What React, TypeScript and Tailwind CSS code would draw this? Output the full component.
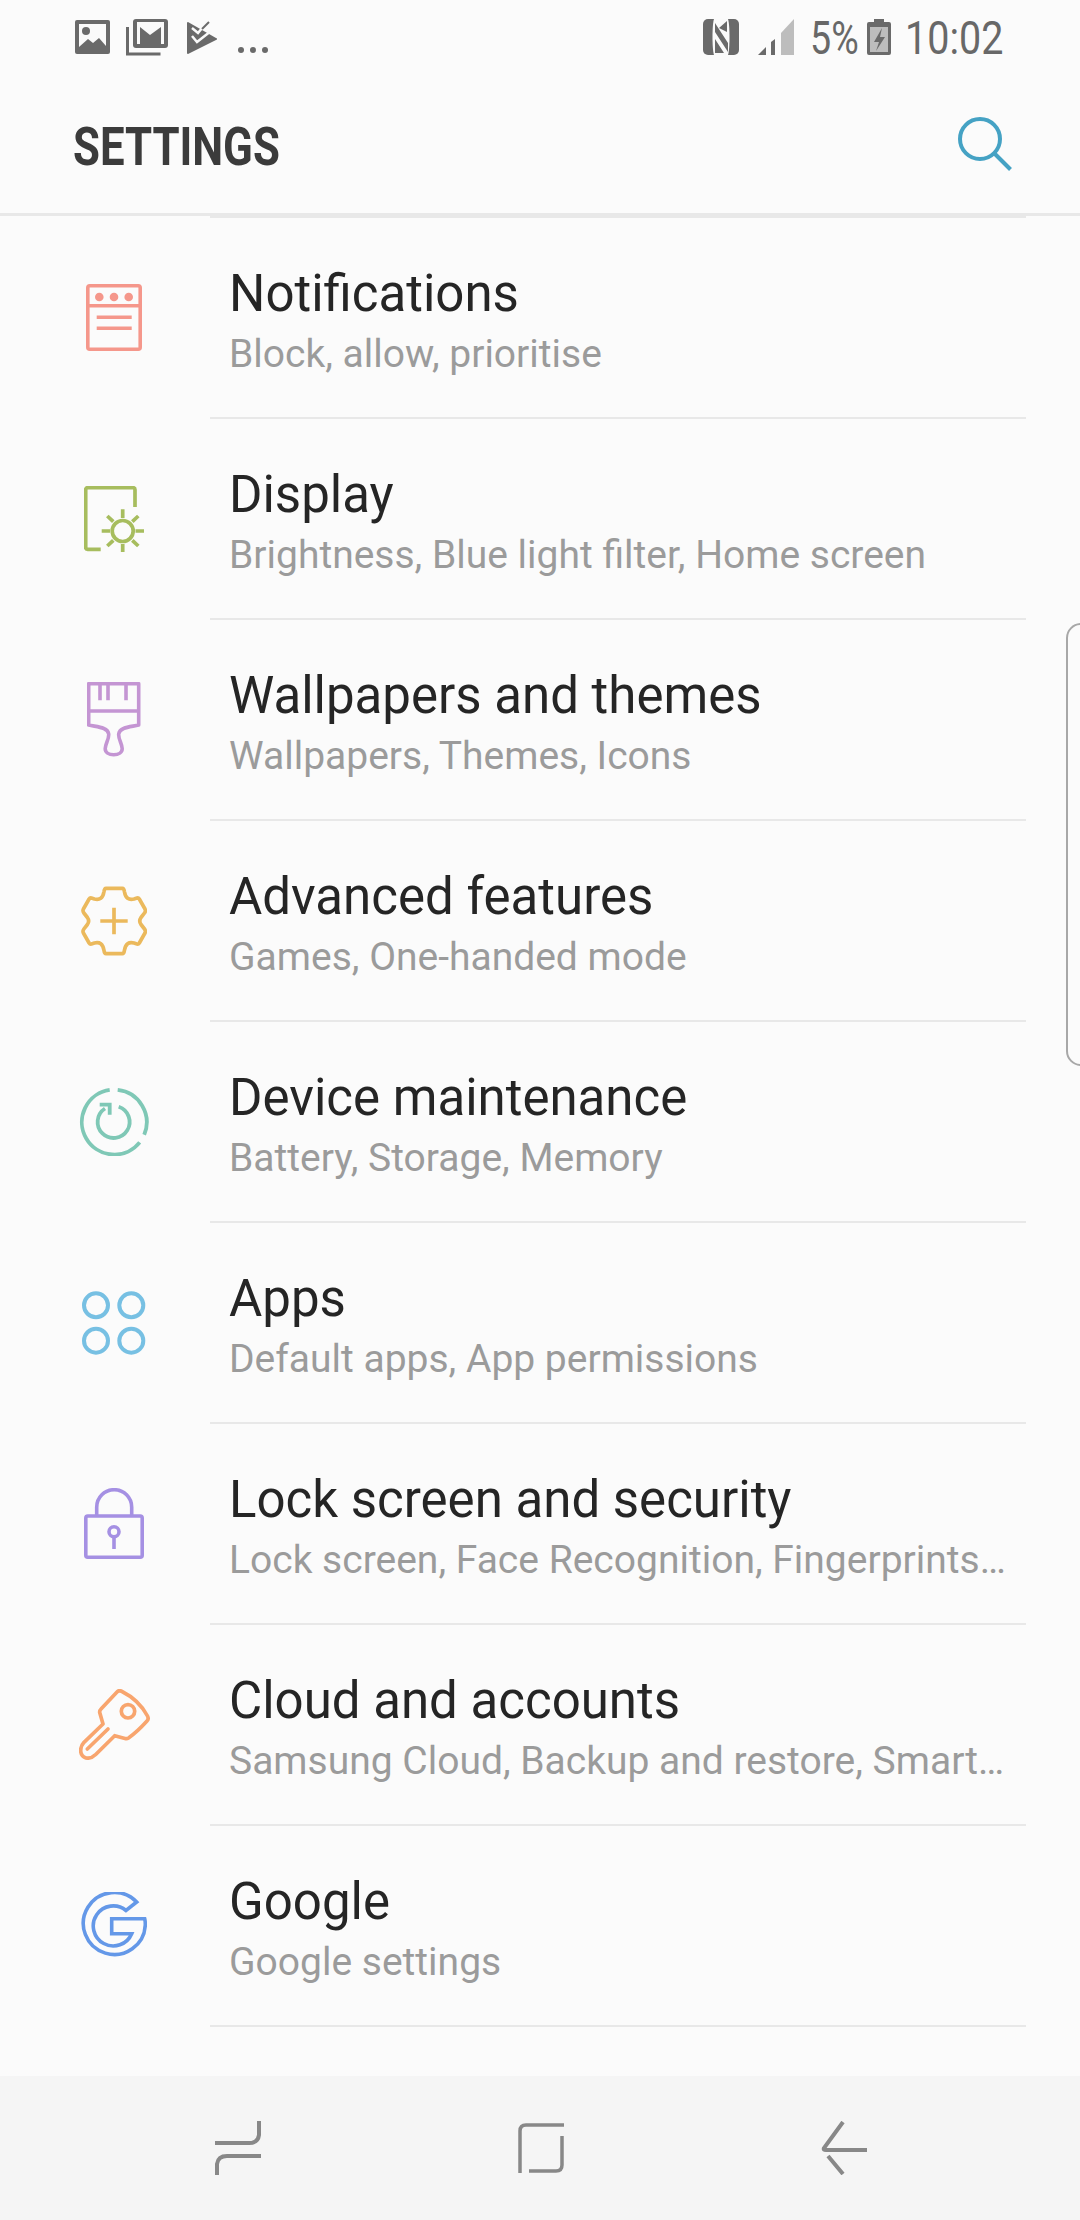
import type { ReactNode } from "react";

const rows: { title: string; sub: string; icon: ReactNode }[] = [
  {
    title: "Notifications",
    sub: "Block, allow, prioritise",
    icon: (
      <svg width="56" height="67" viewBox="0 0 56 67" fill="none" stroke="#f5978b" strokeWidth="3.6">
        <rect x="1.800" y="1.800" width="52.400" height="63.400" rx="2" />
        <path d="M2 21.700h52M10.700 33.300h35M10.700 44.300h35" />
        <circle cx="13.300" cy="13" r="4.300" fill="#f5978b" stroke="none" />
        <circle cx="28" cy="13" r="4.300" fill="#f5978b" stroke="none" />
        <circle cx="42.700" cy="13" r="4.300" fill="#f5978b" stroke="none" />
      </svg>
    ),
  },
  {
    title: "Display",
    sub: "Brightness, Blue light filter, Home screen",
    icon: (
      <svg width="60" height="66" viewBox="0 0 60 66" fill="none" stroke="#a7bd5e" strokeWidth="3.7">
        <path d="M16.700 63.300H3.700a2 2 0 0 1-2-2V3.700a2 2 0 0 1 2-2H49a2 2 0 0 1 2 2V21" />
        <circle cx="38.700" cy="45" r="10.500" />
        <path d="M38.700 23.300V32M38.700 58v8.500M17.700 45H26M51.500 45H60M23.300 30l6 5.700M54.300 30l-6 5.700M23.300 60l6-5.700M54.300 60l-6-5.700" />
      </svg>
    ),
  },
  {
    title: "Wallpapers and themes",
    sub: "Wallpapers, Themes, Icons",
    icon: (
      <svg width="54" height="75" viewBox="0 0 54 75" fill="none" stroke="#c495d3" strokeWidth="3.6" strokeLinejoin="round">
        <path d="M1.700 1.700h50V43c-8 2-19 2-20 9-.5 5 3.500 10 3.500 14.700 0 3.500-3.500 6-8.500 6s-8.500-2.500-8.500-6c0-4.700 4-9.700 3.500-14.700-1-7-12-7-20-9z" />
        <path d="M1.700 29h50M13 1.700v16.600M21 1.700v16.600M39 1.700v16.600" />
      </svg>
    ),
  },
  {
    title: "Advanced features",
    sub: "Games, One-handed mode",
    icon: (
      <svg width="66" height="70" viewBox="0 0 66 70" fill="none" stroke="#ebb95c" strokeWidth="3.7" strokeLinejoin="round">
        <path d="M25 2.300H41.400Q43 2.300 43.500 6Q45 15 53 13L56 12Q57.500 11.700 58.300 13L64 23Q65 25 63.500 27L60 31.500Q57.500 35 60 38.500L63.500 43Q65 45 64 47L58.300 57Q57.500 58.300 56 58L53 57Q45 55 43.500 64Q43 67.700 41.400 67.700H25Q23.400 67.700 22.900 64Q21.400 55 13.400 57L10.400 58Q8.900 58.300 8.100 57L2.400 47Q1.400 45 2.900 43L6.400 38.500Q8.900 35 6.400 31.500L2.900 27Q1.400 25 2.400 23L8.100 13Q8.900 11.700 10.400 12L13.400 13Q21.400 15 22.900 6Q23.400 2.300 25 2.300Z" />
        <path d="M33 21.700v26.600M19.300 35h27.400" />
      </svg>
    ),
  },
  {
    title: "Device maintenance",
    sub: "Battery, Storage, Memory",
    icon: (
      <svg width="70" height="68" viewBox="0 0 70 68" fill="none" stroke="#7fc8b6" strokeWidth="3.8">
        <path d="M38.700 1.900A32.500 32.500 0 0 1 65.200 46.700M60.700 54.400A32.500 32.500 0 1 1 30.700 1.900" />
        <path d="M39.700 18.800A16 16 0 1 1 26 20.500" />
        <path d="M20.700 16.700H30.700V26.700" />
      </svg>
    ),
  },
  {
    title: "Apps",
    sub: "Default apps, App permissions",
    icon: (
      <svg width="64" height="64" viewBox="0 0 64 64" fill="none" stroke="#77c0e3" strokeWidth="4">
        <circle cx="14" cy="14.300" r="12" />
        <circle cx="49.300" cy="14.300" r="12" />
        <circle cx="14" cy="49.700" r="12" />
        <circle cx="49.300" cy="49.700" r="12" />
      </svg>
    ),
  },
  {
    title: "Lock screen and security",
    sub: "Lock screen, Face Recognition, Fingerprints…",
    icon: (
      <svg width="60" height="72" viewBox="0 0 60 72" fill="none" stroke="#a590e3" strokeWidth="3.6">
        <rect x="1.800" y="28" width="56.400" height="41.300" rx="2" />
        <path d="M12.700 28V19.200A17.500 17.500 0 0 1 47.700 19.200V28M30 49v12" />
        <circle cx="30" cy="43.700" r="5" />
      </svg>
    ),
  },
  {
    title: "Cloud and accounts",
    sub: "Samsung Cloud, Backup and restore, Smart…",
    icon: (
      <svg width="71" height="71" viewBox="0 0 71 71" fill="none" stroke="#f8a56e" strokeWidth="3.700" strokeLinejoin="round" strokeLinecap="round">
        <path d="M38.500 2.500Q40.700 1 43 2.500Q60 11 68.500 27Q70 30 68 32Q58 43 49.500 49Q48 50 46 49.500L35.700 46.700L16.700 65.500Q12 70 7 69Q2 67 1.700 62Q1.500 57 5 53.300L24 35L20.700 23.500Q20.500 21.500 22 20Z" />
        <circle cx="49" cy="22.300" r="6.700" />
        <path d="M8.300 60L29 40" />
      </svg>
    ),
  },
  {
    title: "Google",
    sub: "Google settings",
    icon: (
      <svg width="66" height="67" viewBox="0 0 66 67" fill="none" stroke="#6498e8" strokeWidth="3.6">
        <path d="M55.700 10A31 31 0 1 0 64.300 32.700Q64.300 29 63.700 26.700H30.700V41.700H50.700A20 20 0 1 1 45 18.500Z" />
      </svg>
    ),
  },
];

function StatusBar() {
  return (
    <div className="flex h-[72px] items-start justify-between pl-[75px] pr-[78px] pt-[19px] text-[#686868]">
      <div className="flex items-start">
        <svg width="35" height="35" viewBox="0 0 35 35" className="mt-px">
          <rect x="0" y="0" width="35" height="34" rx="2" fill="#6a6a6a" />
          <path d="M4 4h27v22l-7-8-6 5-5-4-9 8z" fill="#fafafa" />
          <circle cx="11" cy="11" r="4" fill="#6a6a6a" />
        </svg>
        <svg width="42" height="37" viewBox="0 0 42 37" className="ml-[16px]" fill="none">
          <path d="M1.500 8v27h33" stroke="#6a6a6a" strokeWidth="3" />
          <rect x="7" y="0" width="35" height="29" rx="3" fill="#6a6a6a" />
          <path d="M11 3h27v22h-3V8L24 16 14 8v17h-3z" fill="#fafafa" />
        </svg>
        <svg width="30" height="34" viewBox="0 0 30 34" className="ml-[19px] mt-[2px]">
          <path d="M1 1l28 16a1 1 0 0 1 0 2L1 33a1 1 0 0 1-1-1V2a1 1 0 0 1 1-1z" fill="#6a6a6a" />
          <path d="M5 15l5 6 14-11M5 7l6 5 9-11" stroke="#fafafa" strokeWidth="2.500" fill="none" />
          <path d="M15 8l7-7" stroke="#6a6a6a" strokeWidth="2" fill="none" />
        </svg>
        <div className="ml-[21px] mt-[28px] flex gap-[6px]">
          <span className="h-[6px] w-[6px] rounded-full bg-[#6a6a6a]" />
          <span className="h-[6px] w-[6px] rounded-full bg-[#6a6a6a]" />
          <span className="h-[6px] w-[6px] rounded-full bg-[#6a6a6a]" />
        </div>
      </div>
      <div className="flex items-start">
        <svg width="36" height="36" viewBox="0 0 36 36">
          <rect width="36" height="36" rx="5" fill="#6a6a6a" />
          <path d="M11 0h14c2 6 2 30 0 36H11C9 30 9 6 11 0z" fill="#fafafa" />
          <path d="M12 4v9l13 20V24zM24 2v11l-8-4zM12 34V20l9 14z" fill="#6a6a6a" />
        </svg>
        <svg width="36" height="36" viewBox="0 0 36 36" className="ml-[19px]">
          <path d="M0 36l8-8v8z" fill="#6a6a6a" />
          <path d="M13 23l4-3v16h-4z" fill="#6a6a6a" />
          <path d="M23 14L36 0v36H23z" fill="#bdbdbd" />
        </svg>
        <div className="ml-[16px] -mt-[5px] h-[48px] w-[47px]">
          <span className="block origin-left scale-x-[0.8] whitespace-nowrap text-[47px] leading-[48px]">5%</span>
        </div>
        <svg width="24" height="36" viewBox="0 0 24 36" className="ml-[10px]">
          <path d="M7 0h10v3h5a2 2 0 0 1 2 2v29a2 2 0 0 1-2 2H2a2 2 0 0 1-2-2V5a2 2 0 0 1 2-2h5z" fill="#6a6a6a" />
          <rect x="3" y="8" width="18" height="25" fill="#bdbdbd" />
          <path d="M15 9l-8 14h5l-3 9 9-14h-5z" fill="#6a6a6a" />
        </svg>
        <div className="ml-[14px] -mt-[5px] h-[48px] w-[97px]">
          <span className="block origin-left scale-x-[0.84] whitespace-nowrap text-[47px] leading-[48px]">10:02</span>
        </div>
      </div>
    </div>
  );
}

function Row({ title, sub, icon }: { title: string; sub: string; icon: ReactNode }) {
  return (
    <div className="flex h-[201px] items-start">
      <div className="flex h-[199px] w-[210px] shrink-0 items-center justify-center pl-[18px]">{icon}</div>
      <div className="h-[201px] w-[816px] border-b-2 border-[#e8e8e8] pl-[19px] pt-[44px]">
        <div className="text-[51px] leading-[64px] text-[#252525]">{title}</div>
        <div className="mt-[2px] whitespace-nowrap text-[39px] leading-[52px] text-[#9b9b9b]">{sub}</div>
      </div>
    </div>
  );
}

export default function App() {
  return (
    <div className="relative flex h-[2220px] w-[1080px] flex-col overflow-hidden bg-[#fbfbfb] [font-family:Roboto,sans-serif]">
      <StatusBar />
      <header className="flex h-[144px] shrink-0 items-start justify-between border-b-[3px] border-[#e8e8e8] pl-[73px] pr-[68px] pt-[49px]">
        <h1 className="origin-left scale-x-[0.825] text-[53px] font-bold leading-[52px] text-[#3b3b3b]">SETTINGS</h1>
        <svg width="54" height="54" viewBox="0 0 54 54" fill="none" stroke="#45a2c4" strokeWidth="4" className="-mt-[4px]">
          <circle cx="22" cy="22" r="20" />
          <path d="M36 36l16.500 16.500" />
        </svg>
      </header>
      <div className="ml-[210px] h-[2px] w-[816px] shrink-0 bg-[#e8e8e8]" />
      <main className="min-h-0 flex-1 overflow-hidden">
        {rows.map((r) => (
          <Row key={r.title} {...r} />
        ))}
      </main>
      <nav className="flex h-[144px] shrink-0 items-center justify-between bg-[#f5f5f5] pl-[215px] pr-[213px]">
        <svg width="46" height="54" viewBox="0 0 46 54" fill="none" stroke="#888888" strokeWidth="4">
          <path d="M0 22h34q9 0 10-8V0M46 35H12q-9 0-10 8v11" />
        </svg>
        <svg width="46" height="50" viewBox="0 0 46 50" fill="none" stroke="#888888">
          <path d="M2 50V8q0-6 6-6h38" strokeWidth="3.500" />
          <path d="M44 13v29q0 6-6 6H11" strokeWidth="3.500" />
        </svg>
        <svg width="46" height="54" viewBox="0 0 46 54" fill="none" stroke="#888888" strokeWidth="4">
          <path d="M22 1L3 27q-1 2 2 2h41M7 35l15 18" />
        </svg>
      </nav>
      <div className="absolute left-[1066px] top-[623px] h-[443px] w-[30px] rounded-[18px] border-2 border-[#a8a8a8]" />
    </div>
  );
}
